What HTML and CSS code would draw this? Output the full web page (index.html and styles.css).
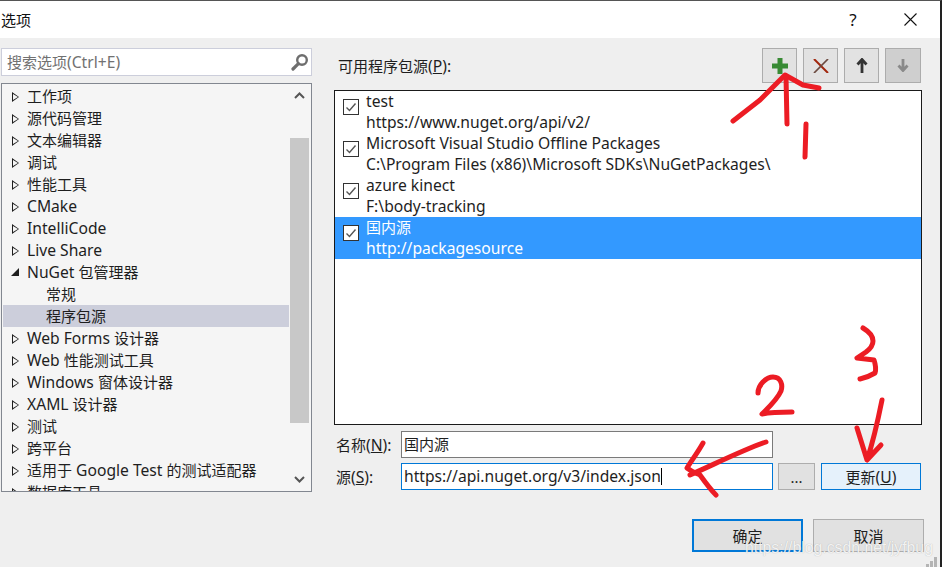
FILE: index.html
```html
<!DOCTYPE html>
<html lang="zh">
<head>
<meta charset="utf-8">
<title>选项</title>
<link rel="stylesheet" href="styles.css">
</head>
<body>
<div class="dialog">
  <header class="titlebar">
    <span class="title">选项</span>
    <span class="help">?</span>
    <svg class="close" width="13" height="13" viewBox="0 0 13 13"><path d="M.5 .5L12.5 12.5M12.5 .5L.5 12.5" stroke="#111" stroke-width="1.1" fill="none"/></svg>
  </header>
  <main class="content">
    <aside class="left">
      <div class="search">
        <span class="placeholder">搜索选项<span class="l">(Ctrl+E)</span></span>
        <svg width="18" height="18" viewBox="0 0 18 18"><circle cx="11" cy="7" r="4.8" fill="none" stroke="#6e6e6e" stroke-width="2.4"/><path d="M7.4 10.6L2 16" stroke="#6e6e6e" stroke-width="3.2" stroke-linecap="round"/></svg>
      </div>
      <div class="tree">
        <ul class="rows">
          <li class="row"><i class="tri"></i>工作项</li>
          <li class="row"><i class="tri"></i>源代码管理</li>
          <li class="row"><i class="tri"></i>文本编辑器</li>
          <li class="row"><i class="tri"></i>调试</li>
          <li class="row"><i class="tri"></i>性能工具</li>
          <li class="row l"><i class="tri"></i>CMake</li>
          <li class="row l"><i class="tri"></i>IntelliCode</li>
          <li class="row l"><i class="tri"></i>Live Share</li>
          <li class="row"><i class="tri open"></i><span class="l">NuGet&nbsp;</span>包管理器</li>
          <li class="row sub">常规</li>
          <li class="row sub selected">程序包源</li>
          <li class="row"><i class="tri"></i><span class="l">Web Forms&nbsp;</span>设计器</li>
          <li class="row"><i class="tri"></i><span class="l">Web&nbsp;</span>性能测试工具</li>
          <li class="row"><i class="tri"></i><span class="l">Windows&nbsp;</span>窗体设计器</li>
          <li class="row"><i class="tri"></i><span class="l">XAML&nbsp;</span>设计器</li>
          <li class="row"><i class="tri"></i>测试</li>
          <li class="row"><i class="tri"></i>跨平台</li>
          <li class="row"><i class="tri"></i>适用于<span class="l">&nbsp;Google Test&nbsp;</span>的测试适配器</li>
          <li class="row"><i class="tri"></i>数据库工具</li>
        </ul>
        <div class="scrollbar">
          <svg class="arrow" width="19" height="20" viewBox="0 0 19 20"><path d="M5 13L9.5 8.5L14 13" fill="none" stroke="#555" stroke-width="2"/></svg>
          <div class="thumb"></div>
          <svg class="arrow" width="19" height="20" viewBox="0 0 19 20"><path d="M5 7L9.5 11.5L14 7" fill="none" stroke="#555" stroke-width="2"/></svg>
        </div>
      </div>
    </aside>
    <section class="right">
      <div class="toolbar">
        <label class="list-label">可用程序包源<span class="l">(<u>P</u>):</span></label>
        <div class="tools">
          <button class="tool"><svg width="16" height="16" viewBox="0 0 16 16"><path d="M8 0V16M0 8H16" stroke="#388a34" stroke-width="5"/></svg></button>
          <button class="tool"><svg width="16" height="14" viewBox="0 0 16 14"><path d="M1 0L15 14" stroke="#a1260d" stroke-width="2"/><path d="M15 0L1 14" stroke="#6b4a40" stroke-width="1.7"/></svg></button>
          <button class="tool"><svg width="12" height="15" viewBox="0 0 12 15"><path d="M6 15V2M1.5 6.5L6 1.5L10.5 6.5" fill="none" stroke="#333" stroke-width="2.8"/></svg></button>
          <button class="tool off"><svg width="12" height="13" viewBox="0 0 12 13"><path d="M6 0V11M1.5 6.5L6 11.5L10.5 6.5" fill="none" stroke="#8a8a8a" stroke-width="2.8"/></svg></button>
        </div>
      </div>
      <div class="sources">
        <div class="source"><span class="check"><svg width="14" height="14" viewBox="0 0 14 14"><path d="M2.5 7.5L5.5 10.5L11.5 3.5" fill="none" stroke="#555" stroke-width="1.4"/></svg></span><div class="lines l"><span>test</span><span>https://www.nuget.org/api/v2/</span></div></div>
        <div class="source"><span class="check"><svg width="14" height="14" viewBox="0 0 14 14"><path d="M2.5 7.5L5.5 10.5L11.5 3.5" fill="none" stroke="#555" stroke-width="1.4"/></svg></span><div class="lines l"><span>Microsoft Visual Studio Offline Packages</span><span>C:\Program Files (x86)\Microsoft SDKs\NuGetPackages\</span></div></div>
        <div class="source"><span class="check"><svg width="14" height="14" viewBox="0 0 14 14"><path d="M2.5 7.5L5.5 10.5L11.5 3.5" fill="none" stroke="#555" stroke-width="1.4"/></svg></span><div class="lines l"><span>azure kinect</span><span>F:\body-tracking</span></div></div>
        <div class="source active"><span class="check"><svg width="14" height="14" viewBox="0 0 14 14"><path d="M2.5 7.5L5.5 10.5L11.5 3.5" fill="none" stroke="#555" stroke-width="1.4"/></svg></span><div class="lines"><span>国内源</span><span class="l">http://packagesource</span></div></div>
      </div>
      <div class="form">
        <label class="form-label">名称<span class="l">(<u>N</u>):</span></label>
        <div class="field">国内源</div>
        <span></span><span></span>
        <label class="form-label">源<span class="l">(<u>S</u>):</span></label>
        <div class="field focus l">https://api.nuget.org/v3/index.json<i class="caret"></i></div>
        <button class="btn browse">...</button>
        <button class="btn update">更新<span class="l">(<u>U</u>)</span></button>
      </div>
      <footer class="actions">
        <button class="btn big primary">确定</button>
        <button class="btn big">取消</button>
      </footer>
    </section>
  </main>
</div>
<svg class="marks" width="942" height="567" viewBox="0 0 942 567">
  <g fill="none" stroke="#ec1c24" stroke-width="5" stroke-linecap="round" stroke-linejoin="round">
    <path d="M733 121L760 100L785 75L803 85L819 88"/>
    <path d="M786 76L787 124"/>
    <path d="M806 124L805 157"/>
    <path d="M758 393C758 385 766 377 773 377C781 377 783 385 781 391C777 400 768 408 762 414C772 412 782 412 792 412"/>
    <path d="M863 328C868 331 873 336 873 341C873 346 870 349 866 352L857 358L874 360C876 366 876 370 875 373C870 376 865 378 860 379"/>
    <path d="M882 400C878 420 872 445 867 460L857 428M867 460L881 445"/>
    <path d="M766 442C745 449 715 464 690 475M703 443C698 452 692 460 687 468C692 472 696 473 700 475C705 482 710 489 716 495"/>
  </g>
</svg>
<svg class="grip" width="12" height="10" viewBox="0 0 12 10"><path d="M0 7h3v3H0zM4 4h3v6H4zM8 0h3v10H8z" fill="#b4b4b4"/></svg>
<div class="watermark">https://blog.csdn.net/jyfbug</div>
</body>
</html>
```
FILE: styles.css
```css
* { box-sizing: border-box; }
html, body { margin: 0; height: 100%; }
body {
  width: 942px;
  height: 567px;
  overflow: hidden;
  position: relative;
  font-family: "Noto Sans", "Noto Sans CJK SC", sans-serif;
  font-size: 15px;
  color: #1e1e1e;
  background: #efefef;
}
ul { list-style: none; margin: 0; padding: 0; }
button { font: inherit; color: inherit; padding: 0; }
.l { font-size: 15.65px; }

.dialog { display: flex; flex-direction: column; height: 567px; border-top: 1px solid #555; border-right: 2px solid #222; }
.titlebar { height: 37px; flex: none; background: #fff; display: flex; align-items: center; padding-left: 1px; color: #111; }
.title { flex: 1; }
.help { width: 14px; margin-right: 44px; font-size: 17px; text-align: center; }
.close { margin-right: 23px; }

.content { flex: 1; display: flex; min-height: 0; }
.left { width: 334px; flex: none; padding: 10px 0 0 1px; }
.search {
  width: 311px; height: 28px;
  background: #fff; border: 1px solid #cccedb;
  display: flex; align-items: center; justify-content: space-between;
  padding: 0 2px 0 5px;
}
.placeholder { color: #717171; }
.tree {
  width: 311px; height: 409px; margin-top: 7px;
  background: #f5f5f5; border: 1px solid #828790;
  display: flex; overflow: hidden; padding: 1px 2px 0 1px;
}
.rows { flex: 1; min-width: 0; overflow: hidden; }
.row { height: 22px; line-height: 22px; padding-left: 24px; white-space: nowrap; position: relative; display: flex; align-items: center; }
.row.sub { padding-left: 43px; }
.row.selected { background: #cccedb; }
.tri {
  position: absolute; left: 9px; top: 7px; width: 0; height: 0;
  border-left: 7px solid #1e1e1e; border-top: 5px solid transparent; border-bottom: 5px solid transparent;
}
.tri::after {
  content: ""; position: absolute; left: -6px; top: -3.5px; width: 0; height: 0;
  border-left: 5px solid #f5f5f5; border-top: 3.5px solid transparent; border-bottom: 3.5px solid transparent;
}
.tri.open { border: 0; left: 8px; top: 7px; border-bottom: 8px solid #1e1e1e; border-left: 8px solid transparent; }
.tri.open::after { display: none; }
.scrollbar { width: 19px; flex: none; display: flex; flex-direction: column; margin-left: 1px; }
.arrow { flex: none; }
.arrow:first-child { margin-bottom: 33px; }
.arrow:last-child { margin-top: 47px; }
.thumb { height: 285px; flex: none; background: #c8c8c8; }

.right { flex: 1; min-width: 0; padding: 10px 0 0 0; display: flex; flex-direction: column; }
.toolbar { display: flex; align-items: center; justify-content: space-between; height: 35px; padding: 0 19px 0 4px; }
.tools { display: flex; gap: 6px; }
.tool { width: 35px; height: 35px; background: #e2e2e2; border: 1px solid #acacac; display: flex; align-items: center; justify-content: center; }
.tool.off { width: 36px; background: #cfcfcf; }

.sources { width: 588px; height: 335px; margin-top: 7px; background: #fff; border: 1px solid #1a1a1a; }
.source { height: 42px; display: flex; padding: 8px 0 0 8px; }
.source.active { background: #3399ff; color: #fff; }
.check { width: 16px; height: 16px; flex: none; background: #fff; border: 1px solid #333; display: flex; align-items: center; justify-content: center; }
.lines { display: flex; flex-direction: column; margin: -8px 0 0 7px; line-height: 21px; white-space: nowrap; }

.form { display: grid; grid-template-columns: 67px 372px 42px 106px; row-gap: 5px; margin-top: 6px; }
.form-label { display: flex; align-items: center; padding-left: 2px; white-space: pre; }
.field { height: 27px; background: #fff; border: 1px solid #7a7a7a; padding: 0 2px; line-height: 25px; white-space: nowrap; }
.field.focus { border-color: #0078d7; }
.caret { display: inline-block; width: 1px; height: 17px; background: #000; vertical-align: -3px; }
.btn { background: #e1e1e1; border: 1px solid #adadad; }
.browse { margin-left: 5px; width: 37px; }
.update { margin-left: 6px; width: 100px; background: #e5f1fb; border-color: #0078d7; }
.actions { display: flex; gap: 10px; margin-top: 29px; padding-left: 358px; }
.big { width: 111px; height: 33px; }
.primary { border: 2px solid #0078d7; }

.marks { position: absolute; left: 0; top: 0; pointer-events: none; }
.grip { position: absolute; left: 926px; top: 557px; }
.watermark {
  position: absolute; left: 745px; top: 539px;
  font-family: "Liberation Sans", sans-serif; font-size: 15.8px;
  color: rgba(255,255,255,.85);
  text-shadow: 0 0 1px rgba(130,130,130,.6);
}
```
